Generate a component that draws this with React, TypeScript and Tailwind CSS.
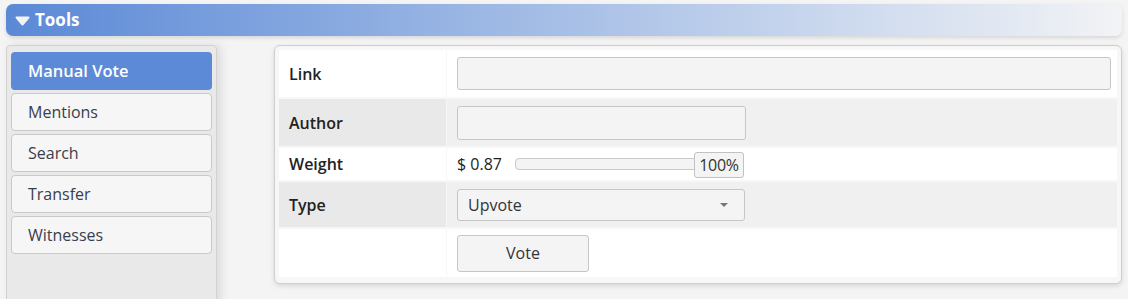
const navItems = ['Manual Vote', 'Mentions', 'Search', 'Transfer', 'Witnesses']

const font = { fontFamily: '"Open Sans", "Noto Sans", sans-serif' }

function Row({ label, gray, children, className = '' }: { label: string; gray?: boolean; children?: React.ReactNode; className?: string }) {
  return (
    <div className={`grid grid-cols-[167px_1fr] gap-x-px border-b-2 border-[#f7f7f7] ${className}`}>
      <div className={`flex items-center pl-[10px] text-[16px] font-semibold text-[#222] ${gray ? 'bg-[#e9e9e9]' : 'bg-white'}`}>
        {label}
      </div>
      <div className={`flex items-center pl-[10px] pr-[6px] ${gray ? 'bg-[#f0f0f0]' : 'bg-white'}`}>{children}</div>
    </div>
  )
}

export default function App() {
  return (
    <div className="h-[299px] overflow-hidden bg-[#f4f4f4] px-[6px] pt-[4px]" style={font}>
      {/* header */}
      <div className="flex h-[32px] items-center gap-[5px] rounded-[7px] bg-gradient-to-r from-[#5b89d6] via-[#a7bfe6] to-[#f2f3f5] pl-[9px] shadow-[0_2px_4px_rgba(0,0,0,0.12)]">
        <svg width="15" height="10" viewBox="0 0 15 10" className="mt-[2px]">
          <path d="M1.5 1.5h12L7.5 8.5z" fill="#f4f4f4" stroke="#f4f4f4" strokeLinejoin="round" strokeWidth="2" />
        </svg>
        <span className="text-[17px] font-bold text-white">Tools</span>
      </div>

      <div className="mt-[9px] flex items-start gap-[57px]">
        {/* sidebar */}
        <div className="flex h-[270px] w-[211px] shrink-0 flex-col gap-[3px] rounded-t-[4px] border border-[#d2d2d2] bg-[#e9e9e9] px-[4px] pt-[6px] shadow-[4px_0_10px_rgba(0,0,0,0.1)]">
          {navItems.map((item, i) => (
            <div
              key={item}
              className={
                i === 0
                  ? 'flex h-[38px] items-center rounded-[4px] bg-[#5c8ad6] pl-[17px] text-[16.5px] font-semibold text-white'
                  : 'flex h-[38px] items-center rounded-[4px] border border-[#c9c9c9] bg-[#f6f6f6] pl-[16px] text-[16px] text-[#3a3e4c]'
              }
            >
              {item}
            </div>
          ))}
        </div>

        {/* main panel */}
        <div className="flex-1 rounded-[6px] border border-[#cfcfcf] bg-[#f7f7f7] p-[4px] shadow-[0_2px_5px_rgba(0,0,0,0.12)]">
          <Row label="Link" className="h-[49px]">
            <div className="h-[33px] w-full rounded-[3px] border border-[#c6c6c6] bg-[#f4f4f4]" />
          </Row>
          <Row label="Author" gray className="h-[49px]">
            <div className="h-[34px] w-[289px] rounded-[3px] border border-[#c6c6c6] bg-[#f4f4f4]" />
          </Row>
          <Row label="Weight" className="h-[34px]">
            <div className="flex items-center">
              <span className="w-[58px] text-[16px] text-[#222]">$ 0.87</span>
              <div className="relative h-[12px] w-[229px] rounded-[4px] border border-[#c8c8c8] bg-[#f4f4f4]">
                <div className="absolute right-[-1px] top-[-7px] flex h-[26px] w-[50px] items-center justify-center rounded-[3px] border border-[#c2c2c2] bg-[#f4f4f4] text-[16px] tracking-[-0.3px] text-[#333]">
                  100%
                </div>
              </div>
            </div>
          </Row>
          <Row label="Type" gray className="h-[47px]">
            <div className="flex h-[32px] w-[288px] items-center justify-between rounded-[3px] border border-[#c6c6c6] bg-[#f4f4f4] pl-[10px] pr-[16px] text-[16px] text-[#333]">
              <span>Upvote</span>
              <svg width="8" height="4" viewBox="0 0 8 4">
                <path d="M0 0h8L4 4z" fill="#777" />
              </svg>
            </div>
          </Row>
          <Row label="" className="h-[50px] border-b-0">
            <button className="flex h-[37px] w-[132px] items-center justify-center rounded-[3px] border border-[#c6c6c6] bg-[#f4f4f4] text-[16px] text-[#333]">
              Vote
            </button>
          </Row>
        </div>
      </div>
    </div>
  )
}
